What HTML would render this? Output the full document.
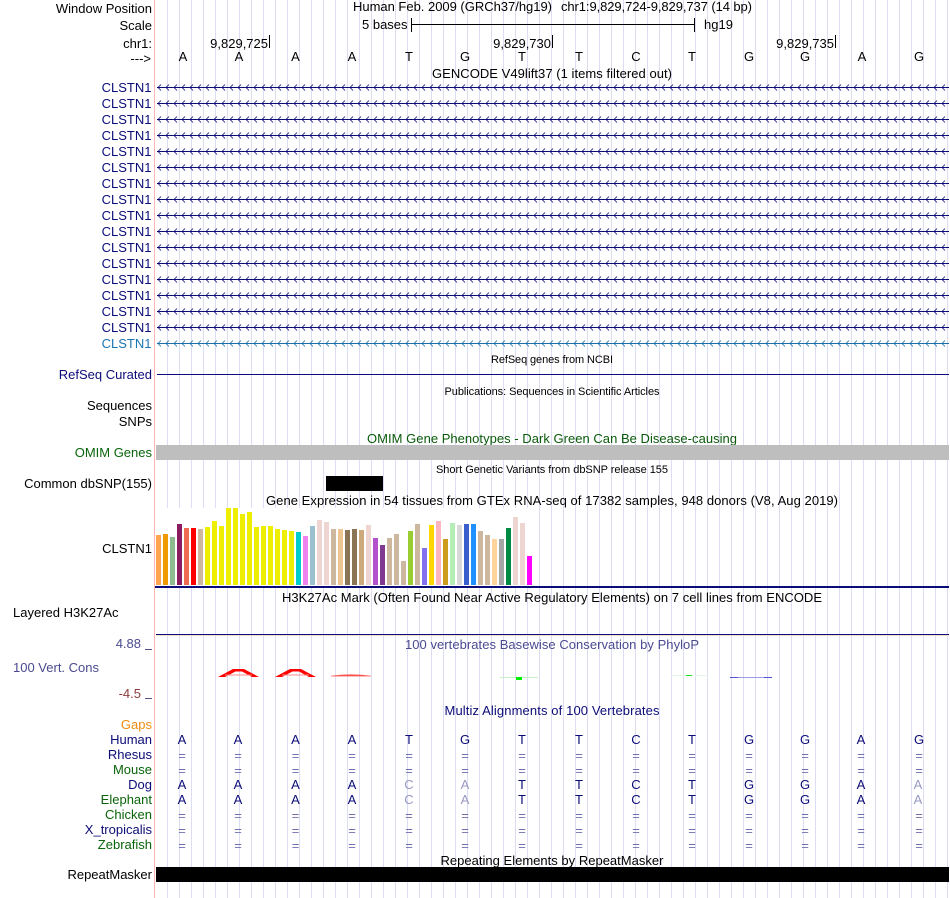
<!DOCTYPE html>
<html><head><meta charset="utf-8"><title>Genome Browser</title>
<style>
html,body{margin:0;padding:0;background:#fff;width:950px;height:898px;overflow:hidden}
svg{display:block}
text{font-family:"Liberation Sans",Arial,sans-serif;font-size:13px;fill:#000}
.l{text-anchor:end}
.m{text-anchor:middle}
.n{fill:#0c0c78}
.g{fill:#0a640a}
.b{fill:#0c0c78;text-anchor:middle}
.e{fill:#7070b0;text-anchor:middle}
.f{fill:#9898c4;text-anchor:middle}
</style></head><body>
<svg width="950" height="898" viewBox="0 0 950 898" xmlns="http://www.w3.org/2000/svg" shape-rendering="crispEdges">
<defs>
<pattern id="grid" x="167" y="0" width="12" height="10" patternUnits="userSpaceOnUse"><rect x="0" y="0" width="1" height="10" fill="#dcdcf2"/></pattern>
<pattern id="arr" x="157" y="0" width="8" height="7" patternUnits="userSpaceOnUse"><path d="M4 0.500L1 3.500L4 6.500" fill="none" stroke="#0c0c78" stroke-width="0.800" shape-rendering="auto"/></pattern>
<pattern id="arr2" x="157" y="0" width="8" height="7" patternUnits="userSpaceOnUse"><path d="M4 0.500L1 3.500L4 6.500" fill="none" stroke="#1a6fa8" stroke-width="0.800" shape-rendering="auto"/></pattern>
</defs>
<rect x="167" y="0" width="783" height="898" fill="url(#grid)"/>
<rect x="154" y="0" width="1" height="898" fill="#ffb4b4"/>

<!-- header -->
<text class="l" x="152" y="13">Window Position</text>
<text class="l" x="152" y="30">Scale</text>
<text class="l" x="152" y="48">chr1:</text>
<text class="l" x="151" y="63">---&gt;</text>
<text x="353" y="11" textLength="199">Human Feb. 2009 (GRCh37/hg19)</text>
<text x="561" y="11" textLength="191">chr1:9,829,724-9,829,737 (14 bp)</text>
<text x="362" y="29">5 bases</text>
<rect x="411" y="24" width="284" height="1" fill="#000"/>
<rect x="411" y="18" width="1" height="14" fill="#000"/>
<rect x="694" y="18" width="1" height="14" fill="#000"/>
<text x="704" y="29">hg19</text>
<text class="l" x="268" y="48">9,829,725</text><rect x="269" y="35" width="1" height="13" fill="#000"/>
<text class="l" x="551" y="48">9,829,730</text><rect x="552" y="35" width="1" height="13" fill="#000"/>
<text class="l" x="834" y="48">9,829,735</text><rect x="835" y="35" width="1" height="13" fill="#000"/>
<g>
<text class="m" x="183" y="61">A</text><text class="m" x="239" y="61">A</text><text class="m" x="295.500" y="61">A</text><text class="m" x="352" y="61">A</text><text class="m" x="409" y="61">T</text><text class="m" x="465" y="61">G</text><text class="m" x="522" y="61">T</text><text class="m" x="579" y="61">T</text><text class="m" x="636" y="61">C</text><text class="m" x="692" y="61">T</text><text class="m" x="749" y="61">G</text><text class="m" x="805" y="61">G</text><text class="m" x="862" y="61">A</text><text class="m" x="919" y="61">G</text>
</g>
<text class="m" x="552" y="78" textLength="240">GENCODE V49lift37 (1 items filtered out)</text>

<!-- gene rows -->
<g>
<text class="l n" x="151.500" y="92">CLSTN1</text>
<text class="l n" x="151.500" y="108">CLSTN1</text>
<text class="l n" x="151.500" y="124">CLSTN1</text>
<text class="l n" x="151.500" y="140">CLSTN1</text>
<text class="l n" x="151.500" y="156">CLSTN1</text>
<text class="l n" x="151.500" y="172">CLSTN1</text>
<text class="l n" x="151.500" y="188">CLSTN1</text>
<text class="l n" x="151.500" y="204">CLSTN1</text>
<text class="l n" x="151.500" y="220">CLSTN1</text>
<text class="l n" x="151.500" y="236">CLSTN1</text>
<text class="l n" x="151.500" y="252">CLSTN1</text>
<text class="l n" x="151.500" y="268">CLSTN1</text>
<text class="l n" x="151.500" y="284">CLSTN1</text>
<text class="l n" x="151.500" y="300">CLSTN1</text>
<text class="l n" x="151.500" y="316">CLSTN1</text>
<text class="l n" x="151.500" y="332">CLSTN1</text>
<text class="l" style="fill:#1a75b5" x="151.500" y="348">CLSTN1</text>
</g>
<g fill="#0c0c78">
<rect x="157" y="87" width="792" height="1"/><rect x="157" y="103" width="792" height="1"/><rect x="157" y="119" width="792" height="1"/><rect x="157" y="135" width="792" height="1"/><rect x="157" y="151" width="792" height="1"/><rect x="157" y="167" width="792" height="1"/><rect x="157" y="183" width="792" height="1"/><rect x="157" y="199" width="792" height="1"/><rect x="157" y="215" width="792" height="1"/><rect x="157" y="231" width="792" height="1"/><rect x="157" y="247" width="792" height="1"/><rect x="157" y="263" width="792" height="1"/><rect x="157" y="279" width="792" height="1"/><rect x="157" y="295" width="792" height="1"/><rect x="157" y="311" width="792" height="1"/><rect x="157" y="327" width="792" height="1"/>
</g>
<rect x="157" y="343" width="792" height="1" fill="#1a6fa8"/>
<g>
<g transform="translate(0,84)"><rect x="157" y="0" width="792" height="7" fill="url(#arr)"/></g>
<g transform="translate(0,100)"><rect x="157" y="0" width="792" height="7" fill="url(#arr)"/></g>
<g transform="translate(0,116)"><rect x="157" y="0" width="792" height="7" fill="url(#arr)"/></g>
<g transform="translate(0,132)"><rect x="157" y="0" width="792" height="7" fill="url(#arr)"/></g>
<g transform="translate(0,148)"><rect x="157" y="0" width="792" height="7" fill="url(#arr)"/></g>
<g transform="translate(0,164)"><rect x="157" y="0" width="792" height="7" fill="url(#arr)"/></g>
<g transform="translate(0,180)"><rect x="157" y="0" width="792" height="7" fill="url(#arr)"/></g>
<g transform="translate(0,196)"><rect x="157" y="0" width="792" height="7" fill="url(#arr)"/></g>
<g transform="translate(0,212)"><rect x="157" y="0" width="792" height="7" fill="url(#arr)"/></g>
<g transform="translate(0,228)"><rect x="157" y="0" width="792" height="7" fill="url(#arr)"/></g>
<g transform="translate(0,244)"><rect x="157" y="0" width="792" height="7" fill="url(#arr)"/></g>
<g transform="translate(0,260)"><rect x="157" y="0" width="792" height="7" fill="url(#arr)"/></g>
<g transform="translate(0,276)"><rect x="157" y="0" width="792" height="7" fill="url(#arr)"/></g>
<g transform="translate(0,292)"><rect x="157" y="0" width="792" height="7" fill="url(#arr)"/></g>
<g transform="translate(0,308)"><rect x="157" y="0" width="792" height="7" fill="url(#arr)"/></g>
<g transform="translate(0,324)"><rect x="157" y="0" width="792" height="7" fill="url(#arr)"/></g>
<g transform="translate(0,340)"><rect x="157" y="0" width="792" height="7" fill="url(#arr2)"/></g>
</g>

<!-- refseq etc -->
<text class="m" x="552" y="363" style="font-size:11px" textLength="122">RefSeq genes from NCBI</text>
<text class="l n" x="152" y="379">RefSeq Curated</text>
<rect x="157" y="374" width="792" height="1" fill="#0c0c78"/>
<text class="m" x="552" y="395" style="font-size:11px" textLength="215">Publications: Sequences in Scientific Articles</text>
<text class="l" x="152" y="410">Sequences</text>
<text class="l" x="152" y="426">SNPs</text>
<text class="m" x="552" y="443" style="fill:#0a5a0a" textLength="370">OMIM Gene Phenotypes - Dark Green Can Be Disease-causing</text>
<text class="l g" x="152" y="457">OMIM Genes</text>
<rect x="156" y="445" width="793" height="15" fill="#bebebe"/>
<text class="m" x="552" y="473" style="font-size:11px" textLength="232">Short Genetic Variants from dbSNP release 155</text>
<text class="l" x="152" y="488">Common dbSNP(155)</text>
<rect x="326" y="476" width="57" height="15" fill="#000"/>
<text class="m" x="552" y="505" textLength="572">Gene Expression in 54 tissues from GTEx RNA-seq of 17382 samples, 948 donors (V8, Aug 2019)</text>

<!-- GTEx -->
<text class="l" x="152" y="553">CLSTN1</text>
<rect x="156" y="508" width="378" height="78" fill="#fff"/>
<g>
<rect x="156" y="535" width="5" height="50" fill="#ffa54f"/>
<rect x="163" y="534" width="5" height="51" fill="#ee9a00"/>
<rect x="170" y="537" width="5" height="48" fill="#8fbc8f"/>
<rect x="177" y="524" width="5" height="61" fill="#8b1c62"/>
<rect x="184" y="528" width="5" height="57" fill="#ee6a50"/>
<rect x="191" y="528" width="5" height="57" fill="#ff0000"/>
<rect x="198" y="529" width="5" height="56" fill="#cdb79e"/>
<rect x="205" y="527" width="5" height="58" fill="#eeee00"/>
<rect x="212" y="521" width="5" height="64" fill="#eeee00"/>
<rect x="219" y="526" width="5" height="59" fill="#eeee00"/>
<rect x="226" y="508" width="5" height="77" fill="#eeee00"/>
<rect x="233" y="508" width="5" height="77" fill="#eeee00"/>
<rect x="240" y="514" width="5" height="71" fill="#eeee00"/>
<rect x="247" y="512" width="5" height="73" fill="#eeee00"/>
<rect x="254" y="527" width="5" height="58" fill="#eeee00"/>
<rect x="261" y="526" width="5" height="59" fill="#eeee00"/>
<rect x="268" y="526" width="5" height="59" fill="#eeee00"/>
<rect x="275" y="529" width="5" height="56" fill="#eeee00"/>
<rect x="282" y="530" width="5" height="55" fill="#eeee00"/>
<rect x="289" y="531" width="5" height="54" fill="#eeee00"/>
<rect x="296" y="532" width="5" height="53" fill="#00cdcd"/>
<rect x="303" y="536" width="5" height="49" fill="#ee82ee"/>
<rect x="310" y="526" width="5" height="59" fill="#9ac0cd"/>
<rect x="317" y="520" width="5" height="65" fill="#eed5d2"/>
<rect x="324" y="522" width="5" height="63" fill="#eed5d2"/>
<rect x="331" y="529" width="5" height="56" fill="#cdb79e"/>
<rect x="338" y="529" width="5" height="56" fill="#eec591"/>
<rect x="345" y="530" width="5" height="55" fill="#8b7355"/>
<rect x="352" y="529" width="5" height="56" fill="#8b7355"/>
<rect x="359" y="530" width="5" height="55" fill="#cdaa7d"/>
<rect x="366" y="525" width="5" height="60" fill="#eed5d2"/>
<rect x="373" y="538" width="5" height="47" fill="#b452cd"/>
<rect x="380" y="545" width="5" height="40" fill="#7d3a8f"/>
<rect x="387" y="538" width="5" height="47" fill="#cdb79e"/>
<rect x="394" y="534" width="5" height="51" fill="#cdb79e"/>
<rect x="401" y="561" width="5" height="24" fill="#cdb79e"/>
<rect x="408" y="531" width="5" height="54" fill="#9acd32"/>
<rect x="415" y="524" width="5" height="61" fill="#cdb79e"/>
<rect x="422" y="548" width="5" height="37" fill="#8470ee"/>
<rect x="429" y="525" width="5" height="60" fill="#ffd700"/>
<rect x="436" y="521" width="5" height="64" fill="#ffb6c1"/>
<rect x="443" y="539" width="5" height="46" fill="#cd9b1d"/>
<rect x="450" y="523" width="5" height="62" fill="#b4eeb4"/>
<rect x="457" y="525" width="5" height="60" fill="#d9d9d9"/>
<rect x="464" y="524" width="5" height="61" fill="#3a5fcd"/>
<rect x="471" y="524" width="5" height="61" fill="#1e90ff"/>
<rect x="478" y="531" width="5" height="54" fill="#cdb79e"/>
<rect x="485" y="535" width="5" height="50" fill="#cdb79e"/>
<rect x="492" y="539" width="5" height="46" fill="#ffd39b"/>
<rect x="499" y="539" width="5" height="46" fill="#a6a6a6"/>
<rect x="506" y="528" width="5" height="57" fill="#008b45"/>
<rect x="513" y="517" width="5" height="68" fill="#eed5d2"/>
<rect x="520" y="523" width="5" height="62" fill="#eed5d2"/>
<rect x="527" y="556" width="5" height="29" fill="#ff00ff"/>
</g>
<rect x="155" y="586" width="794" height="2" fill="#0c0c78"/>

<!-- H3K27Ac -->
<text class="m" x="552" y="602" textLength="540">H3K27Ac Mark (Often Found Near Active Regulatory Elements) on 7 cell lines from ENCODE</text>
<text x="13" y="617">Layered H3K27Ac</text>
<rect x="156" y="634" width="793" height="1" fill="#0c0c78"/>
<rect x="156" y="635" width="793" height="1" fill="#f0e0c8"/>

<!-- conservation -->
<text class="l" x="141" y="648" style="fill:#4a4a90">4.88</text>
<rect x="145" y="649" width="7" height="1" fill="#555580"/>
<text class="m" x="552" y="649" style="fill:#4a4a90" textLength="294">100 vertebrates Basewise Conservation by PhyloP</text>
<text x="13" y="672" style="fill:#4a4a90">100 Vert. Cons</text>
<text class="l" x="141" y="698" style="fill:#8c3c3c">-4.5</text>
<rect x="145" y="698" width="7" height="1" fill="#555580"/>
<g shape-rendering="auto">
<path d="M218 677L233 669H244L259 677H252L242 671.500H235.500L225 677Z" fill="#ff0000"/>
<rect x="225" y="674.500" width="27" height="1" fill="#ff8888"/>
<path d="M275 677L290 669H301L316 677H309L299 671.500H292.500L282 677Z" fill="#ff0000"/>
<rect x="282" y="674.500" width="27" height="1" fill="#ff8888"/>
<path d="M331 675.800Q351 673 371 675.800V676.400H331Z" fill="#ff5050"/>
<rect x="500" y="677" width="38" height="1" fill="#c8f0c8"/>
<rect x="516" y="677" width="6" height="3" fill="#00ee00"/>
<rect x="671" y="675" width="37" height="1" fill="#e8f4e8"/>
<rect x="686" y="675" width="6" height="1" fill="#22dd22"/>
<rect x="730" y="677" width="42" height="1" fill="#9a9ae6"/>
<rect x="730" y="677" width="8" height="1" fill="#5050d8"/>
<rect x="764" y="677" width="8" height="1" fill="#5050d8"/>
</g>

<!-- multiz -->
<text class="m" x="552" y="715" style="fill:#0c0c78" textLength="215">Multiz Alignments of 100 Vertebrates</text>
<text class="l" x="152" y="729" style="fill:#ee8c10">Gaps</text>
<text class="l n" x="152" y="744">Human</text>
<text class="l n" x="152" y="759">Rhesus</text>
<text class="l g" x="152" y="774">Mouse</text>
<text class="l n" x="152" y="789">Dog</text>
<text class="l g" x="152" y="804">Elephant</text>
<text class="l g" x="152" y="819">Chicken</text>
<text class="l n" x="152" y="834">X_tropicalis</text>
<text class="l g" x="152" y="849">Zebrafish</text>
<g>
<text class="b" x="182" y="744">A</text><text class="b" x="238" y="744">A</text><text class="b" x="295.500" y="744">A</text><text class="b" x="352" y="744">A</text><text class="b" x="409" y="744">T</text><text class="b" x="465" y="744">G</text><text class="b" x="522" y="744">T</text><text class="b" x="579" y="744">T</text><text class="b" x="636" y="744">C</text><text class="b" x="692" y="744">T</text><text class="b" x="749" y="744">G</text><text class="b" x="805" y="744">G</text><text class="b" x="861" y="744">A</text><text class="b" x="919" y="744">G</text>
</g>
<g>
<text class="e" x="182" y="760">=</text><text class="e" x="238" y="760">=</text><text class="e" x="295.500" y="760">=</text><text class="e" x="352" y="760">=</text><text class="e" x="409" y="760">=</text><text class="e" x="465" y="760">=</text><text class="e" x="522" y="760">=</text><text class="e" x="579" y="760">=</text><text class="e" x="636" y="760">=</text><text class="e" x="692" y="760">=</text><text class="e" x="749" y="760">=</text><text class="e" x="805" y="760">=</text><text class="e" x="861" y="760">=</text><text class="e" x="919" y="760">=</text>
</g>
<g>
<text class="e" x="182" y="775">=</text><text class="e" x="238" y="775">=</text><text class="e" x="295.500" y="775">=</text><text class="e" x="352" y="775">=</text><text class="e" x="409" y="775">=</text><text class="e" x="465" y="775">=</text><text class="e" x="522" y="775">=</text><text class="e" x="579" y="775">=</text><text class="e" x="636" y="775">=</text><text class="e" x="692" y="775">=</text><text class="e" x="749" y="775">=</text><text class="e" x="805" y="775">=</text><text class="e" x="861" y="775">=</text><text class="e" x="919" y="775">=</text>
</g>
<g>
<text class="b" x="182" y="789">A</text><text class="b" x="238" y="789">A</text><text class="b" x="295.500" y="789">A</text><text class="b" x="352" y="789">A</text><text class="f" x="409" y="789">C</text><text class="f" x="465" y="789">A</text><text class="b" x="522" y="789">T</text><text class="b" x="579" y="789">T</text><text class="b" x="636" y="789">C</text><text class="b" x="692" y="789">T</text><text class="b" x="749" y="789">G</text><text class="b" x="805" y="789">G</text><text class="b" x="861" y="789">A</text><text class="f" x="918" y="789">A</text>
</g>
<g>
<text class="b" x="182" y="804">A</text><text class="b" x="238" y="804">A</text><text class="b" x="295.500" y="804">A</text><text class="b" x="352" y="804">A</text><text class="f" x="409" y="804">C</text><text class="f" x="465" y="804">A</text><text class="b" x="522" y="804">T</text><text class="b" x="579" y="804">T</text><text class="b" x="636" y="804">C</text><text class="b" x="692" y="804">T</text><text class="b" x="749" y="804">G</text><text class="b" x="805" y="804">G</text><text class="b" x="861" y="804">A</text><text class="f" x="918" y="804">A</text>
</g>
<g>
<text class="e" x="182" y="820">=</text><text class="e" x="238" y="820">=</text><text class="e" x="295.500" y="820">=</text><text class="e" x="352" y="820">=</text><text class="e" x="409" y="820">=</text><text class="e" x="465" y="820">=</text><text class="e" x="522" y="820">=</text><text class="e" x="579" y="820">=</text><text class="e" x="636" y="820">=</text><text class="e" x="692" y="820">=</text><text class="e" x="749" y="820">=</text><text class="e" x="805" y="820">=</text><text class="e" x="861" y="820">=</text><text class="e" x="919" y="820">=</text>
</g>
<g>
<text class="e" x="182" y="835">=</text><text class="e" x="238" y="835">=</text><text class="e" x="295.500" y="835">=</text><text class="e" x="352" y="835">=</text><text class="e" x="409" y="835">=</text><text class="e" x="465" y="835">=</text><text class="e" x="522" y="835">=</text><text class="e" x="579" y="835">=</text><text class="e" x="636" y="835">=</text><text class="e" x="692" y="835">=</text><text class="e" x="749" y="835">=</text><text class="e" x="805" y="835">=</text><text class="e" x="861" y="835">=</text><text class="e" x="919" y="835">=</text>
</g>
<g>
<text class="e" x="182" y="850">=</text><text class="e" x="238" y="850">=</text><text class="e" x="295.500" y="850">=</text><text class="e" x="352" y="850">=</text><text class="e" x="409" y="850">=</text><text class="e" x="465" y="850">=</text><text class="e" x="522" y="850">=</text><text class="e" x="579" y="850">=</text><text class="e" x="636" y="850">=</text><text class="e" x="692" y="850">=</text><text class="e" x="749" y="850">=</text><text class="e" x="805" y="850">=</text><text class="e" x="861" y="850">=</text><text class="e" x="919" y="850">=</text>
</g>

<!-- repeatmasker -->
<text class="m" x="552" y="865" textLength="223">Repeating Elements by RepeatMasker</text>
<text class="l" x="152" y="879">RepeatMasker</text>
<rect x="156" y="867" width="793" height="15" fill="#000"/>
</svg>
</body></html>
